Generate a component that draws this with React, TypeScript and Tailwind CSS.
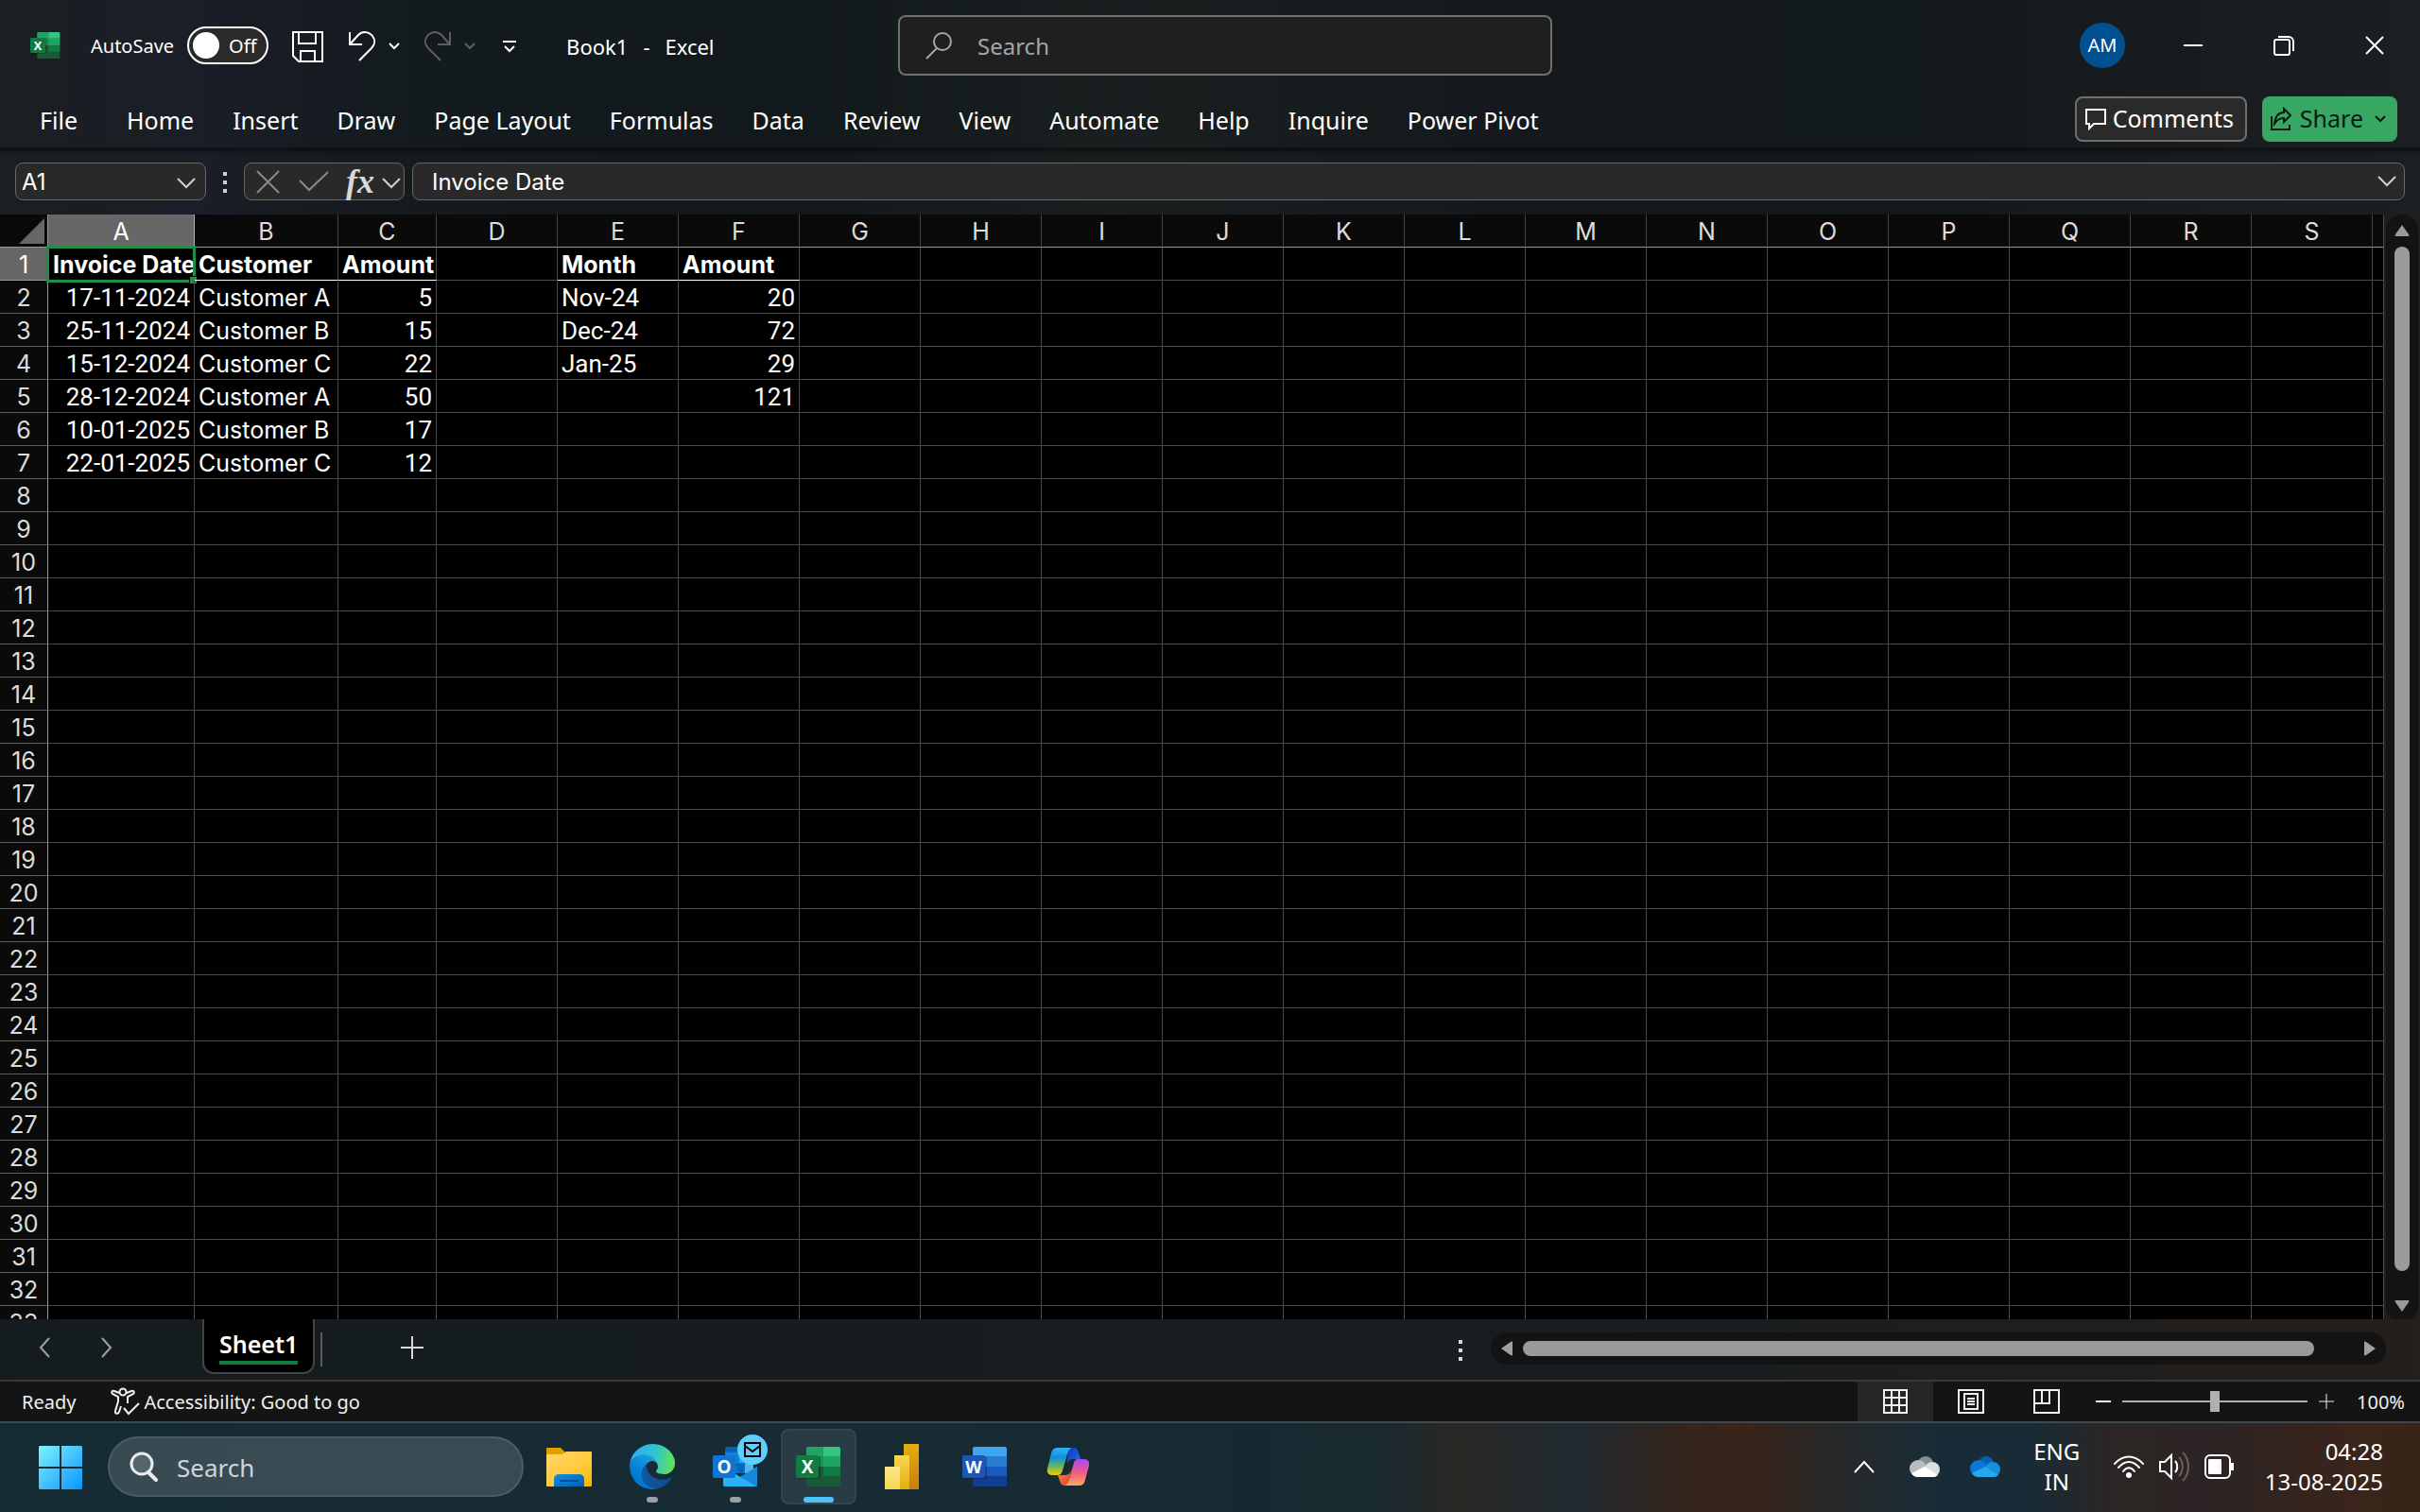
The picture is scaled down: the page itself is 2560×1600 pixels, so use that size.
import React from "react";

const UI = 'font-["Noto_Sans","Open_Sans",sans-serif]';
const SHEET = 'font-["Inter","Liberation_Sans",sans-serif]';

const MENUS = ["Home", "Insert", "Draw", "Page Layout", "Formulas", "Data", "Review", "View", "Automate", "Help", "Inquire", "Power Pivot"];
const COLS = "ABCDEFGHIJKLMNOPQRS".split("");
const ROW_COUNT = 33;

const CELLS: Record<string, string> = {
  A1: "Invoice Date", B1: "Customer", C1: "Amount", E1: "Month", F1: "Amount",
  A2: "17-11-2024", B2: "Customer A", C2: "5", E2: "Nov-24", F2: "20",
  A3: "25-11-2024", B3: "Customer B", C3: "15", E3: "Dec-24", F3: "72",
  A4: "15-12-2024", B4: "Customer C", C4: "22", E4: "Jan-25", F4: "29",
  A5: "28-12-2024", B5: "Customer A", C5: "50", F5: "121",
  A6: "10-01-2025", B6: "Customer B", C6: "17",
  A7: "22-01-2025", B7: "Customer C", C7: "12",
};

type Stroke = { d: string; w: number; h: number; className?: string; sw?: number };

function Line({ d, w, h, className = "", sw = 2 }: Stroke) {
  return (
    <svg width={w} height={h} viewBox={`0 0 ${w} ${h}`} fill="none" stroke="currentColor" strokeWidth={sw} className={`shrink-0 ${className}`} aria-hidden="true">
      <path d={d} />
    </svg>
  );
}

function ExcelLogo({ size }: { size: number }) {
  return (
    <svg width={size} height={size} viewBox="0 0 48 48" aria-hidden="true">
      <rect x="11" y="3" width="36" height="42" rx="2" fill="#185c37" />
      <path d="M11 5a2 2 0 0 1 2-2h16v10H11z" fill="#21a366" />
      <path d="M29 3h16a2 2 0 0 1 2 2v8H29z" fill="#33c481" />
      <path d="M11 13h18v11H11z" fill="#169456" />
      <path d="M29 13h18v11H29z" fill="#21a366" />
      <path d="M29 24h18v10H29z" fill="#107c41" />
      <rect x="2" y="13" width="24" height="24" rx="2" fill="#000" opacity=".25" />
      <rect x="0" y="12" width="24" height="24" rx="2" fill="#107c41" />
      <text x="12" y="31" textAnchor="middle" fontSize="19" fontWeight="700" fill="#fff" fontFamily="Open Sans, sans-serif">X</text>
    </svg>
  );
}

function WordLogo() {
  return (
    <svg width="48" height="48" viewBox="0 0 48 48" aria-hidden="true">
      <rect x="11" y="3" width="36" height="42" rx="2" fill="#103f91" />
      <path d="M11 5a2 2 0 0 1 2-2h32a2 2 0 0 1 2 2v8H11z" fill="#41a5ee" />
      <path d="M11 13h36v11H11z" fill="#2b7cd3" />
      <path d="M11 24h36v10H11z" fill="#185abd" />
      <rect x="2" y="13" width="24" height="24" rx="2" fill="#000" opacity=".25" />
      <rect x="0" y="12" width="24" height="24" rx="2" fill="#1a57b8" />
      <text x="12" y="31" textAnchor="middle" fontSize="18" fontWeight="700" fill="#fff" fontFamily="Open Sans, sans-serif">W</text>
    </svg>
  );
}

function OutlookLogo() {
  return (
    <svg width="48" height="48" viewBox="0 0 48 48" aria-hidden="true">
      <rect x="13" y="3" width="30" height="28" rx="2" fill="#0364b8" />
      <path d="M13 9h15v11H13z" fill="#0a84dc" />
      <path d="M28 9h15v11H28z" fill="#28a8ea" />
      <path d="M24 20h10v11H24z" fill="#0078d4" />
      <path d="M34 20h9v11h-9z" fill="#50b5f0" />
      <path d="M11 24l18 11 18-11v19a2 2 0 0 1-2 2H13a2 2 0 0 1-2-2z" fill="#1a9be6" />
      <path d="M29 35l18-11v19a2 2 0 0 1-1 2z" fill="#1588dc" />
      <path d="M11 24l35 21H13a2 2 0 0 1-2-2z" fill="#2bb0f5" />
      <path d="M24 21l6 14 4-14z" fill="#0a4f94" opacity=".5" />
      <rect x="0" y="12" width="24" height="24" rx="2" fill="#0f75d1" />
      <text x="12" y="31" textAnchor="middle" fontSize="19" fontWeight="700" fill="#fff" fontFamily="Open Sans, sans-serif">O</text>
    </svg>
  );
}

function EdgeLogo() {
  return (
    <svg width="48" height="48" viewBox="0 0 256 256" aria-hidden="true">
      <defs>
        <linearGradient id="e1" x1="60" y1="178" x2="237" y2="178" gradientUnits="userSpaceOnUse">
          <stop stopColor="#0c59a4" /><stop offset="1" stopColor="#114a8b" />
        </linearGradient>
        <linearGradient id="e2" x1="145" y1="86" x2="41" y2="201" gradientUnits="userSpaceOnUse">
          <stop stopColor="#1b9de2" /><stop offset=".3" stopColor="#1595df" /><stop offset=".7" stopColor="#0680d7" /><stop offset="1" stopColor="#0078d4" />
        </linearGradient>
        <linearGradient id="e3" x1="10" y1="60" x2="250" y2="110" gradientUnits="userSpaceOnUse">
          <stop stopColor="#35a9ee" /><stop offset=".3" stopColor="#2fb9e8" /><stop offset=".6" stopColor="#35c9c0" /><stop offset="1" stopColor="#62e44f" />
        </linearGradient>
      </defs>
      <path fill="url(#e1)" d="M231.19 190.22a92.7 92.7 0 0 1-10.54 4.71 102.11 102.11 0 0 1-35.9 6.46c-47.32 0-88.54-32.55-88.54-74.32A31.47 31.47 0 0 1 112.64 99.6c-42.8 1.8-53.8 46.4-53.8 72.53 0 73.88 68.09 81.37 82.76 81.37 7.91 0 19.84-2.3 27-4.56l1.31-.44a128.34 128.34 0 0 0 66.6-52.8 4 4 0 0 0-5.32-5.48z" />
      <path fill="url(#e2)" d="M105.73 241.42a79.2 79.2 0 0 1-22.74-21.34 80.72 80.72 0 0 1 29.53-120.48c3.12-1.47 8.45-4.13 15.54-4a32.35 32.35 0 0 1 25.69 13 31.88 31.88 0 0 1 6.36 18.66c0-.21 24.46-79.6-80-79.6-43.9 0-80 41.66-80 78.21a130.15 130.15 0 0 0 12.11 56 128 128 0 0 0 156.38 67.11 75.55 75.55 0 0 1-62.78-8z" />
      <path fill="url(#e3)" d="M152.33 148.86c-.81 1.05-3.3 2.5-3.3 5.66 0 2.61 1.7 5.12 4.72 7.23 14.38 10 41.49 8.68 41.56 8.68a59.56 59.56 0 0 0 30.27-8.35 61.38 61.38 0 0 0 30.43-52.88c.26-22.41-8-37.31-11.34-43.91C223.45 23.88 177.69.5 127.97.5A128 128 0 0 0 0 126.7c.48-36.54 36.8-66.05 80-66.05 3.5 0 23.46.34 42 10.07 16.34 8.58 24.9 18.94 30.85 29.21 6.18 10.67 7.28 24.15 7.28 29.52 0 5.37-2.74 13.33-7.8 19.41z" />
    </svg>
  );
}

function FolderLogo() {
  return (
    <svg width="48" height="48" viewBox="0 0 48 48" aria-hidden="true">
      <defs>
        <linearGradient id="f1" x1="0" y1="0" x2="1" y2="1"><stop stopColor="#ffd86b" /><stop offset=".6" stopColor="#ffca3a" /><stop offset="1" stopColor="#f8b400" /></linearGradient>
        <linearGradient id="f2" x1="0" y1="0" x2="1" y2="1"><stop stopColor="#1490df" /><stop offset="1" stopColor="#0460b4" /></linearGradient>
      </defs>
      <path d="M0 5a1 1 0 0 1 1-1h14l5 5v5H0z" fill="#e3a100" />
      <path d="M0 11h16l5-3h26a1 1 0 0 1 1 1v35a1 1 0 0 1-1 1H1a1 1 0 0 1-1-1z" fill="url(#f1)" />
      <path d="M8 45V37a5 5 0 0 1 5-5h22a5 5 0 0 1 5 5v8z" fill="url(#f2)" />
      <path d="M14 39h20" stroke="#0b4f95" strokeWidth="2" />
    </svg>
  );
}

function PowerBiLogo() {
  return (
    <svg width="48" height="48" viewBox="0 0 48 48" aria-hidden="true">
      <defs>
        <linearGradient id="p1" x1="0" y1="0" x2="0" y2="1"><stop stopColor="#e6ad10" /><stop offset="1" stopColor="#c87e0e" /></linearGradient>
        <linearGradient id="p2" x1="0" y1="0" x2="0" y2="1"><stop stopColor="#f6d751" /><stop offset="1" stopColor="#e6ad10" /></linearGradient>
        <linearGradient id="p3" x1="0" y1="0" x2="0" y2="1"><stop stopColor="#f9e589" /><stop offset="1" stopColor="#f6d751" /></linearGradient>
      </defs>
      <path d="M26 0h16v48H26z" fill="url(#p1)" />
      <path d="M16 12h16v36H16z" fill="url(#p2)" />
      <path d="M6 24h16v24H6z" fill="url(#p3)" />
    </svg>
  );
}

function CopilotLogo() {
  return (
    <svg width="48" height="48" viewBox="0 0 48 48" aria-hidden="true">
      <defs>
        <linearGradient id="c1" x1="0" y1="0" x2="0" y2="1"><stop stopColor="#2fb4f5" /><stop offset=".35" stopColor="#0f8fe0" /><stop offset=".65" stopColor="#5cb56c" /><stop offset="1" stopColor="#f5c800" /></linearGradient>
        <linearGradient id="c2" x1="0" y1="0" x2="0" y2="1"><stop stopColor="#a04df5" /><stop offset=".5" stopColor="#ee5a86" /><stop offset="1" stopColor="#ffa65c" /></linearGradient>
        <linearGradient id="c3" x1="0" y1="0" x2="1" y2="1"><stop stopColor="#1236c4" /><stop offset="1" stopColor="#1f6ee8" /></linearGradient>
        <linearGradient id="c4" x1="0" y1="0" x2="1" y2="1"><stop stopColor="#ff8a3c" /><stop offset="1" stopColor="#e5382e" /></linearGradient>
      </defs>
      <path d="M24 4h6c3 0 4 2 5 5l2 7h-7c-4 0-6 2-7 5z" fill="url(#c3)" />
      <path d="M23 44h-3c-3 0-4-2-5-5l-2-6h7c4 0 6-2 7-5z" fill="url(#c4)" />
      <path d="M13 4h15c-3 1-4 4-5 7l-5 17c-1 4-3 5-6 5H7c-4 0-6-3-5-7l4-16c1-4 3-6 7-6z" fill="url(#c1)" />
      <path d="M35 44H20c3-1 4-4 5-7l5-17c1-4 3-4 6-4h5c4 0 6 3 5 7l-4 15c-1 4-3 6-7 6z" fill="url(#c2)" />
    </svg>
  );
}

function Cloud({ a, b, c, d }: { a: string; b: string; c: string; d: string }) {
  return (
    <svg width="32" height="24" viewBox="0 0 32 24" aria-hidden="true">
      <circle cx="17" cy="9" r="8" fill={a} />
      <circle cx="9" cy="14" r="9" fill={b} />
      <circle cx="24" cy="15" r="8" fill={c} />
      <path d="M2 19l14-7 14 9a7 7 0 0 1-5 2H8a8 8 0 0 1-6-4z" fill={d} />
    </svg>
  );
}

function TitleBar() {
  return (
    <header className="grid h-24 shrink-0 grid-cols-[1fr_minmax(0,692px)_1fr] items-center pl-8">
      <div className="flex items-center">
        <ExcelLogo size={32} />
        <label className="ml-8 flex cursor-pointer items-center text-xl text-white">
          <span className="pt-0.5">AutoSave</span>
          <span className="relative ml-3.5 flex h-10 w-[86px] items-center rounded-full border-2 border-white bg-[#2a2a2a]">
            <input type="checkbox" role="switch" className="absolute inset-0 appearance-none" />
            <span className="ml-1 size-7 rounded-full bg-white" />
            <span className="ml-2.5 pt-0.5">Off</span>
          </span>
        </label>
        <button aria-label="Save" className="ml-6 pt-0.5 text-white"><Line w={34} h={34} d="M2 2h31v31H8l-6-6zM8 2v12h18V2M10 33V22h15v11" /></button>
        <button aria-label="Undo" className="ml-[25px] pt-0.5 text-white"><Line w={32} h={34} d="M3 2v13h13M3 15L12 5c5-5 12-3 15 1 3 4 3 9-1 13L13 32" /></button>
        <button aria-label="Undo options" className="ml-3 pt-0.5 text-white"><Line w={12} h={8} d="M1 1l5 5 5-5" /></button>
        <button aria-label="Redo" className="ml-6 pt-0.5 text-[#5f5f5f]"><Line w={32} h={34} d="M29 2v13H16M29 15L20 5c-5-5-12-3-15 1-3 4-3 9 1 13l13 13" /></button>
        <button aria-label="Redo options" className="ml-3 pt-0.5 text-[#5f5f5f]"><Line w={12} h={8} d="M1 1l5 5 5-5" /></button>
        <button aria-label="Customize Quick Access Toolbar" className="ml-7 pt-0.5 text-white"><Line w={16} h={14} d="M1 2h14M3 7l5 5 5-5" /></button>
        <h1 className="ml-[52px] flex gap-4 pt-0.5 text-[22px] text-white"><span>Book1</span><span>-</span><span>Excel</span></h1>
      </div>
      <label className="flex h-16 items-center gap-[26px] rounded-lg border-2 border-[#707070] bg-[#1f1f1f] pl-[26px] text-[#a6a6a6]">
        <svg width="30" height="30" viewBox="0 0 30 30" fill="none" stroke="currentColor" strokeWidth="2" aria-hidden="true"><circle cx="19" cy="11" r="9" /><path d="M13 18L2 29" /></svg>
        <input aria-label="Search" placeholder="Search" className="min-w-0 flex-1 bg-transparent pt-0.5 text-2xl outline-none placeholder:text-[#a6a6a6]" />
      </label>
      <div className="flex items-center justify-end text-white">
        <button className="mr-6 size-12 rounded-full bg-[#00508f] text-xl">AM</button>
        <button aria-label="Minimize" className="grid h-24 w-24 place-items-center"><Line w={20} h={4} d="M0 2h20" /></button>
        <button aria-label="Restore" className="grid h-24 w-24 place-items-center">
          <svg width="22" height="22" viewBox="0 0 22 22" fill="none" stroke="currentColor" strokeWidth="2" aria-hidden="true"><rect x="1" y="5" width="16" height="16" rx="2" /><path d="M5 2h11a5 5 0 0 1 5 5v10" /></svg>
        </button>
        <button aria-label="Close" className="grid h-24 w-24 place-items-center"><Line w={20} h={20} d="M1 1l18 18M19 1L1 19" /></button>
      </div>
    </header>
  );
}

function MenuBar() {
  return (
    <nav className="flex h-[60px] shrink-0 items-center pr-6 pl-[42px] text-[25px] text-white">
      <button className="mr-[52px] pt-1">File</button>
      <div className="flex gap-[41px] pt-1 whitespace-nowrap">
        {MENUS.map((m) => <button key={m}>{m}</button>)}
      </div>
      <button className="ml-auto flex h-12 items-center gap-1.5 rounded-lg border-2 border-[#6f6f6f] bg-[#2a2a2a] pr-3 pl-2">
        <Line w={24} h={24} d="M2 2h20v15H10l-5 5v-5H2z" />Comments
      </button>
      <button className="ml-4 flex h-12 items-center gap-2 rounded-lg bg-[#38a763] pr-3 pl-2 text-[#0b1a11]">
        <Line w={24} h={26} d="M2 10v14h19v-5M15 2l7 7-7 7v-4c-5 0-7 2-10 6 1-8 4-12 10-12z" />Share
        <Line w={12} h={8} d="M1 1l5 5 5-5" className="ml-1" />
      </button>
    </nav>
  );
}

function FormulaBar() {
  return (
    <div className={`flex h-[71px] shrink-0 items-start bg-linear-to-b from-black/50 via-transparent via-[12%] to-transparent px-4 pt-4 text-[#d0d0d0] ${SHEET}`}>
      <div className="flex h-10 w-[202px] items-center rounded-lg border border-[#666] bg-[#292929] pr-2.5 pl-1.5">
        <input aria-label="Name box" defaultValue="A1" className="min-w-0 flex-1 bg-transparent pt-0.5 text-2xl text-white outline-none" />
        <Line w={20} h={12} d="M1 1l9 9 9-9" className="mt-1" />
      </div>
      <svg width="4" height="22" viewBox="0 0 4 22" className="mx-[18px] mt-2.5" fill="currentColor" aria-hidden="true"><path d="M0 0h4v4H0zM0 9h4v4H0zM0 18h4v4H0z" /></svg>
      <div className="flex h-10 w-[170px] items-center rounded-lg border border-[#666] bg-[#292929] pl-3">
        <button aria-label="Cancel" className="text-[#8a8a8a]"><Line w={25} h={25} d="M1 1l23 23M24 1L1 24" /></button>
        <button aria-label="Enter" className="ml-5 text-[#8a8a8a]"><Line w={32} h={22} d="M1 10l10 10L31 1" /></button>
        <button aria-label="Insert function" className="ml-[18px] w-8 text-left font-['Liberation_Serif',serif] text-[36px] leading-8 font-bold text-[#d8d8d8] italic">fx</button>
        <button aria-label="Function options" className="ml-1.5 pt-1"><Line w={20} h={12} d="M1 1l9 9 9-9" /></button>
      </div>
      <div className="ml-2 flex h-10 flex-1 items-center rounded-lg border border-[#666] bg-[#292929] pr-2 pl-5">
        <input aria-label="Formula bar" defaultValue="Invoice Date" className="min-w-0 flex-1 bg-transparent pt-0.5 text-2xl text-white outline-none" />
        <Line w={20} h={12} d="M1 1l9 9 9-9" />
      </div>
    </div>
  );
}

function Cell({ col, row }: { col: string; row: number }) {
  const text = CELLS[`${col}${row}`];
  const head = row === 1;
  const right = !head && (col === "A" || col === "C" || col === "F");
  const numeric = !head && col !== "B";
  const underlined = head && "ABCEF".includes(col);
  return (
    <td className={`relative h-[35px] border-r border-b border-r-[#4a4a4a] p-0 ${underlined ? "border-b-white" : "border-b-[#4a4a4a]"}`}>
      {text && (
        <div className={`overflow-hidden pt-0.5 leading-8 whitespace-nowrap ${col === "A" && head ? "pl-[5px]" : "px-1"} ${head ? "font-bold" : ""} ${right ? "text-right" : ""} ${numeric ? "font-[Roboto,sans-serif] text-[26px]" : ""}`}>
          {text}
        </div>
      )}
      {col === "A" && head && (
        <span className="absolute -inset-x-0.5 -top-0.5 -bottom-[3px] border-[3px] border-[#1f8c4a]">
          <span className="absolute -right-1 -bottom-1 size-2 border-t border-l border-black bg-[#1f8c4a]" />
        </span>
      )}
    </td>
  );
}

function Sheet() {
  return (
    <main className={`flex min-h-0 flex-1 ${SHEET}`}>
      <div className="min-w-0 flex-1 overflow-hidden border-r border-[#4a4a4a] bg-black">
        <table className="w-full table-fixed border-separate border-spacing-0 text-[25px] text-white">
          <colgroup>
            <col className="w-[51px]" />
            <col className="w-[155px]" />
            <col className="w-[152px]" />
            <col className="w-[104px]" />
            {COLS.slice(3).map((c) => <col key={c} className="w-[128px]" />)}
            <col />
          </colgroup>
          <thead>
            <tr>
              <th className="h-[35px] border-r border-b border-[#999] bg-[#0a0a0a] p-0">
                <svg width="27" height="27" viewBox="0 0 27 27" className="ml-auto mr-[3px]" aria-hidden="true"><path d="M27 0v27H0z" fill="#676767" /></svg>
              </th>
              {COLS.map((c) => (
                <th key={c} scope="col" className={`border-r border-b border-b-[#999] p-0 pt-0.5 leading-8 font-normal ${c === "A" ? "border-r-[#b0b0b0] bg-[#676767]" : "border-r-[#444] bg-[#0a0a0a] text-[#dcdcdc]"}`}>{c}</th>
              ))}
              <th className="border-b border-[#999] bg-[#0a0a0a]" />
            </tr>
          </thead>
          <tbody>
            {Array.from({ length: ROW_COUNT }, (_, i) => i + 1).map((r) => (
              <tr key={r}>
                <th scope="row" className={`h-[35px] border-r border-b border-r-[#999] p-0 pt-0.5 leading-8 font-normal ${r === 1 ? "border-b-[#999] bg-[#676767]" : "border-b-[#5c5c5c] bg-[#0a0a0a] text-[#dcdcdc]"}`}>{r}</th>
                {COLS.map((c) => <Cell key={c} col={c} row={r} />)}
                <td className="border-b border-[#4a4a4a]" />
              </tr>
            ))}
          </tbody>
        </table>
      </div>
      <div className="mr-0.5 -mb-[3px] ml-0.5 flex w-[34px] flex-col items-center rounded-full bg-[#131313] pt-2.5 pb-2.5 text-[#9a9a9a]">
        <svg width="18" height="14" viewBox="0 0 18 14" aria-hidden="true"><path d="M9 1l7 10c1 2 0 2-1 2H3c-1 0-2 0-1-2z" fill="currentColor" /></svg>
        <div className="mt-2.5 mb-[30px] w-4 flex-1 rounded-full bg-[#9a9a9a]" />
        <svg width="18" height="14" viewBox="0 0 18 14" aria-hidden="true"><path d="M9 13L2 3C1 1 2 1 3 1h12c1 0 2 0 1 2z" fill="currentColor" /></svg>
      </div>
    </main>
  );
}

function SheetTabs() {
  return (
    <div className="flex h-16 shrink-0 items-start bg-linear-to-r from-[#151c1f] via-[#171d20] via-[65%] to-[#251f1b] text-[#a0a0a0]">
      <button aria-label="Previous sheet" className="mt-[19px] ml-[41px]"><Line w={12} h={22} d="M11 1L2 11l9 10" /></button>
      <button aria-label="Next sheet" className="mt-[19px] ml-[54px]"><Line w={12} h={22} d="M1 1l9 10-9 10" /></button>
      <button className="ml-[95px] h-[58px] rounded-b-xl border-2 border-t-0 border-[#444] bg-black px-4 pt-1 pb-1 text-[25px] leading-9 font-semibold text-white">
        <span className="block border-b-4 border-[#107c41]">Sheet1</span>
      </button>
      <span className="mt-3.5 ml-1.5 h-9 w-0.5 bg-[#5c5c5c]" />
      <button aria-label="New sheet" className="mt-[18px] ml-[83px] text-[#d8d8d8]"><Line w={24} h={24} d="M12 0v24M0 12h24" /></button>
      <div className="ml-auto flex w-[981px] items-start">
        <svg width="4" height="22" viewBox="0 0 4 22" className="mt-[22px]" fill="#d8d8d8" aria-hidden="true"><path d="M0 0h4v4H0zM0 9h4v4H0zM0 18h4v4H0z" /></svg>
        <div className="mt-3.5 ml-[30px] flex h-[34px] w-[947px] items-center rounded-full bg-[#131313] px-2.5">
          <svg width="14" height="18" viewBox="0 0 14 18" aria-hidden="true"><path d="M1 9l10-7c2-1 2 0 2 1v12c0 1 0 2-2 1z" fill="currentColor" /></svg>
          <div className="mr-[52px] ml-2.5 h-4 flex-1 rounded-full bg-[#9a9a9a]" />
          <svg width="14" height="18" viewBox="0 0 14 18" aria-hidden="true"><path d="M13 9L3 2C1 1 1 2 1 3v12c0 1 0 2 2 1z" fill="currentColor" /></svg>
        </div>
      </div>
      <span className="w-9" />
    </div>
  );
}

function StatusBar() {
  return (
    <footer className="flex h-[46px] shrink-0 items-center border-y-2 border-t-[#3a3836] border-b-[#3e4a50] bg-[#141414] pr-[17px] pl-[23px] text-xl text-[#f0f0f0]">
      <span className="pt-0.5">Ready</span>
      <button className="ml-9 flex items-center gap-1">
        <svg width="32" height="30" viewBox="0 0 32 30" fill="none" stroke="currentColor" strokeWidth="2" aria-hidden="true">
          <circle cx="14" cy="5" r="3.5" />
          <path d="M10 6L5 4C3 3 1 5 3 7l6 3v5L6 25c-1 3 3 4 4 1l2-6M18 6l5-2c2-1 4 1 2 3l-6 3v7M15 22l5 6L31 17" />
        </svg>
        <span className="pt-0.5">Accessibility: Good to go</span>
      </button>
      <div className="ml-auto flex items-center">
        <button aria-label="Normal view" className="grid h-[42px] w-20 place-items-center bg-[#262626]"><Line w={28} h={28} d="M2 2h24v24H2zM2 10h24M2 18h24M10 2v24M18 2v24" /></button>
        <button aria-label="Page layout view" className="grid h-[42px] w-20 place-items-center"><Line w={28} h={28} d="M1 2h26v24H1zM7 6h14v16H7zM10 11h8M10 14h8M10 17h8" /></button>
        <button aria-label="Page break preview" className="grid h-[42px] w-20 place-items-center"><Line w={28} h={28} d="M1 2h26v24H1zM1 16h16V2M9 2v14" /></button>
        <button aria-label="Zoom out" className="ml-3"><Line w={16} h={16} sw={2} d="M0 8h16" /></button>
        <input type="range" aria-label="Zoom" min={0} max={100} defaultValue={50} className="mx-3 h-[22px] w-[196px] appearance-none bg-transparent [&::-webkit-slider-runnable-track]:h-0.5 [&::-webkit-slider-runnable-track]:bg-[#b0b0b0] [&::-webkit-slider-thumb]:-mt-2.5 [&::-webkit-slider-thumb]:h-[22px] [&::-webkit-slider-thumb]:w-2.5 [&::-webkit-slider-thumb]:appearance-none [&::-webkit-slider-thumb]:bg-[#b0b0b0]" />
        <button aria-label="Zoom in"><Line w={16} h={16} sw={1} d="M0 8h16M8 0v16" /></button>
        <button className="ml-6 w-[50px] pt-0.5">100%</button>
      </div>
    </footer>
  );
}

function TaskIcon({ label, children, state }: { label: string; children: React.ReactNode; state?: "open" | "active" }) {
  return (
    <button aria-label={label} className={`relative grid size-20 place-items-center rounded-lg border-2 ${state === "active" ? "border-white/5 bg-white/8" : "border-transparent"}`}>
      {children}
      {state === "open" && <span className="absolute bottom-0 h-1.5 w-3 rounded-full bg-[#9aa0a4]" />}
      {state === "active" && <span className="absolute bottom-0 h-1.5 w-8 rounded-full bg-[#4cc2ff]" />}
    </button>
  );
}

function Taskbar() {
  return (
    <div className="flex h-[94px] shrink-0 items-start bg-[linear-gradient(90deg,#152b33_0%,#172b35_20%,#172b34_40%,#18292f_57%,#2a2724_60%,#202a30_65%,#32261f_69%,#3a241a_72%,#2a2725_75%,#182c37_80%,#182b36_84%,#2b2625_87%,#2d2424_92%,#3a241b_97%,#39241a_100%)] pt-1.5 pr-[39px] pl-[41px] text-white">
      <button aria-label="Start" className="mt-[18px]">
        <svg width="46" height="46" viewBox="0 0 46 46" aria-hidden="true">
          <defs><linearGradient id="w1" x1="0" y1="0" x2="46" y2="46" gradientUnits="userSpaceOnUse"><stop stopColor="#7df3ff" /><stop offset=".5" stopColor="#45c3fd" /><stop offset="1" stopColor="#0a95ff" /></linearGradient></defs>
          <path d="M1 0h21v22H0V1zM24 0h21l1 1v21H24zM0 24h22v22H1l-1-1zM24 24h22v21l-1 1H24z" fill="url(#w1)" />
        </svg>
      </button>
      <label className="mt-2 ml-[27px] flex h-16 w-[440px] items-center gap-5 rounded-full border-2 border-white/10 bg-white/15 pl-[21px]">
        <svg width="30" height="32" viewBox="0 0 30 32" fill="none" stroke="#e8ecee" strokeWidth="3" aria-hidden="true"><circle cx="13" cy="13" r="11" fill="#fff" fillOpacity=".15" /><path d="M20 22l8 8" strokeWidth="4" strokeLinecap="round" /></svg>
        <input aria-label="Taskbar search" placeholder="Search" className="min-w-0 flex-1 bg-transparent pt-0.5 text-[26px] outline-none placeholder:text-[#d0d5d8]" />
      </label>
      <div className="ml-2 flex gap-2">
        <TaskIcon label="File Explorer"><FolderLogo /></TaskIcon>
        <TaskIcon label="Edge" state="open"><EdgeLogo /></TaskIcon>
        <TaskIcon label="Outlook" state="open">
          <OutlookLogo />
          <span className="absolute top-1 right-1 grid size-8 place-items-center rounded-full bg-[#60cdff] text-black"><Line w={20} h={16} d="M2 1h16v14H2zM2 4l8 6 8-6" /></span>
        </TaskIcon>
        <TaskIcon label="Excel" state="active"><ExcelLogo size={48} /></TaskIcon>
        <TaskIcon label="Power BI"><PowerBiLogo /></TaskIcon>
        <TaskIcon label="Word"><WordLogo /></TaskIcon>
        <TaskIcon label="Copilot"><CopilotLogo /></TaskIcon>
      </div>
      <div className="ml-auto flex h-20 items-center text-2xl leading-8">
        <button aria-label="Show hidden icons"><Line w={22} h={14} d="M1 13L11 2l10 11" /></button>
        <button aria-label="Cloud sync" className="ml-[37px]"><Cloud a="#868e92" b="#b9bdbf" c="#dcdedf" d="#ffffff" /></button>
        <button aria-label="OneDrive" className="ml-8"><Cloud a="#0560b5" b="#0a78d6" c="#1490df" d="#28a8ea" /></button>
        <button className="ml-8 w-14 text-center">ENG<br />IN</button>
        <button aria-label="Network, volume, battery" className="ml-8 flex items-center gap-4">
          <svg width="32" height="26" viewBox="0 0 32 26" fill="none" stroke="currentColor" strokeWidth="2" aria-hidden="true"><path d="M1 10c9-10 21-10 30 0M5 14c7-8 15-8 22 0M10 18c4-5 8-5 12 0" strokeLinecap="round" /><circle cx="16" cy="22" r="3" fill="currentColor" stroke="none" /></svg>
          <svg width="32" height="34" viewBox="0 0 32 34" fill="none" stroke="currentColor" strokeWidth="2" aria-hidden="true"><path d="M1 12h5l7-7v24l-7-7H1zM17 11c3 3 3 9 0 12" /><path d="M21 7c5 5 5 15 0 20M25 2c8 8 8 22 0 30" stroke="#6a5f5d" /></svg>
          <svg width="32" height="26" viewBox="0 0 32 26" fill="none" stroke="currentColor" strokeWidth="2" aria-hidden="true"><rect x="1" y="1" width="26" height="24" rx="5" /><rect x="4" y="5" width="14" height="16" rx="1" fill="currentColor" stroke="none" /><path d="M29 9v8" strokeWidth="4" /></svg>
        </button>
        <button className="ml-8 text-right">04:28<br />13-08-2025</button>
      </div>
    </div>
  );
}

export default function App() {
  return (
    <div className={`flex h-screen flex-col overflow-hidden bg-[linear-gradient(90deg,#1b1f22_0%,#1a1e27_8%,#141b1f_16%,#12191c_33%,#191f1f_46%,#15191d_62%,#12191b_78%,#181c1f_90%,#1b1f21_100%)] ${UI}`}>
      <TitleBar />
      <MenuBar />
      <FormulaBar />
      <Sheet />
      <SheetTabs />
      <StatusBar />
      <Taskbar />
    </div>
  );
}
